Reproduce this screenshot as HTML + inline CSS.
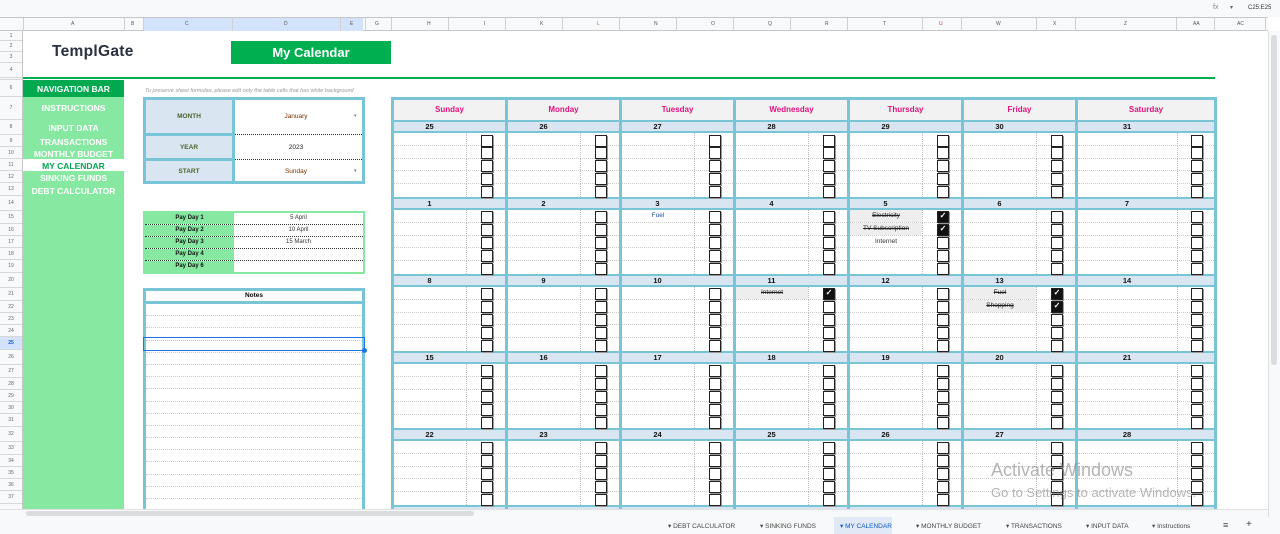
<!DOCTYPE html>
<html><head><meta charset="utf-8"><style>
*{box-sizing:border-box;margin:0;padding:0}
body{width:1280px;height:534px;overflow:hidden;background:#fff;font-family:"Liberation Sans",Arial,sans-serif;position:relative}
.a{position:absolute}
#top{left:0;top:0;width:1280px;height:17px;background:#f8f9fa}
#colh{left:0;top:17px;width:1268px;height:14px;background:#f8f9fa;border-top:1px solid #c7c7c7;border-bottom:1px solid #c7c7c7;font-size:5px;color:#555}
#colh span{position:absolute;top:3px}
#colh i{position:absolute;top:0;height:13px;border-left:1px solid #d0d0d0}
#rowh{left:0;top:31px;width:23px;height:479px;background:#f8f9fa;border-right:1px solid #c7c7c7}
#rowh div{border-bottom:1px solid #d8d8d8;font-size:5px;color:#666;text-align:center;display:flex;align-items:center;justify-content:center}
#nav{left:23px;top:97px;width:101px;height:413px;background:#86e8a1}
.nv{position:absolute;left:23px;width:101px;text-align:center;color:#fff;font-weight:bold;font-size:8.5px}
.mt{left:143px;top:97px;width:222px;height:87px;border:3px solid #78c5d8;background:#fff}
.mt div{position:absolute;font-size:6.5px;text-align:center}
.pd{left:143px;top:211px;width:222px;height:63px;border:2px solid #86e8a1;background:#fff}
.pd div{height:12px;border-bottom:1px dotted #333;display:flex;font-size:6px;line-height:11px}
.pd div:last-child{border-bottom:none}
.pd b{width:89px;background:#86e8a1;text-align:center;font-weight:bold;color:#111}
.pd span{flex:1;text-align:center;color:#333}
#notes{left:143px;top:288px;width:222px;height:222px;border:3px solid #78c5d8;border-bottom:none}
#notes p{height:12.2px;border-bottom:1px dotted #ccc}
#cal{left:391px;top:97px;width:826px;border:3px solid #78c5d8;border-left:none}
.w{display:flex}
.d{width:114px;border-left:3px solid #78c5d8}
.d.sat{width:139px}
.dn{height:20px;background:#f2f2f2;color:#e0127d;font-weight:bold;font-size:8px;text-align:center;line-height:20px}
.h{height:13px;border-top:2px solid #78c5d8;border-bottom:2px solid #78c5d8;background:#d9e6f2;font-size:7.5px;font-weight:bold;text-align:center;line-height:9px;padding-right:40px;color:#111}
.sat .h{padding-right:38px}
.d p{height:12.8px;position:relative;border-bottom:1px dotted #ccc;font-size:6.5px;line-height:12px}
.d p:last-child{border-bottom:none}
.d p::before{content:"";position:absolute;left:72px;top:0;height:13px;border-left:1px dotted #bbb}
.d p::after{content:"";position:absolute;left:87px;top:1.5px;width:10px;height:10px;border:1.5px solid #222;background:#fff;box-shadow:1px 1px 0 #999}
.sat p::before{left:99px}.sat p::after{left:113px}
.d p.k::after{content:"✓";background:#111;color:#fff;font-size:8px;line-height:8px;text-align:center;font-weight:bold}
.d p span{position:absolute;left:0;width:72px;text-align:center;color:#333}
.d p span.s{text-decoration:line-through;background:#eee;color:#222}
.d p span.b{color:#1f4ea8}
#tabs{left:0;top:517px;width:1280px;height:17px;background:#f8f9fa;font-size:6.5px;color:#444}
#tabs span{position:absolute;top:5px}
</style></head><body>
<div id="top" class="a"><span class="a" style="left:1213px;top:4px;font-size:7px;color:#888">fx</span><span class="a" style="left:1230px;top:4px;font-size:6px;color:#666">▾</span><span class="a" style="left:1248px;top:5px;font-size:6px;color:#333">C25:E25</span></div>
<div id="colh" class="a">
<span style="left:71px">A</span><span style="left:131px">B</span><span style="left:375px">G</span><span style="left:427px">H</span><span style="left:484px">I</span><span style="left:540px">K</span><span style="left:597px;color:#e07020">L</span><span style="left:654px">N</span><span style="left:711px">O</span><span style="left:768px">Q</span><span style="left:825px">R</span><span style="left:883px">T</span><span style="left:939px;color:#c33">U</span><span style="left:996px">W</span><span style="left:1053px">X</span><span style="left:1124px">Z</span><span style="left:1193px">AA</span><span style="left:1237px">AC</span>
<div class="a" style="left:143px;top:0;width:220px;height:13px;background:#d3e3fd"></div>
<span style="left:185px">C</span><span style="left:284px">D</span><span style="left:350px">E</span>
<i style="left:23px"></i><i style="left:124px"></i><i style="left:143px"></i><i style="left:232px"></i><i style="left:340px"></i><i style="left:365px"></i><i style="left:391px"></i><i style="left:448px"></i><i style="left:505px"></i><i style="left:562px"></i><i style="left:619px"></i><i style="left:676px"></i><i style="left:733px"></i><i style="left:790px"></i><i style="left:847px"></i><i style="left:922px"></i><i style="left:961px"></i><i style="left:1036px"></i><i style="left:1075px"></i><i style="left:1176px"></i><i style="left:1214px"></i><i style="left:1265px"></i>
</div>
<div id="rowh" class="a">
<div style="height:10px">1</div><div style="height:11px">2</div><div style="height:11px">3</div><div style="height:15px">4</div><div style="height:2px"></div><div style="height:17px">6</div><div style="height:23px">7</div><div style="height:15px">8</div><div style="height:12px">9</div><div style="height:12px">10</div><div style="height:12px">11</div><div style="height:12px">12</div><div style="height:13px">13</div><div style="height:15px">14</div><div style="height:13px">15</div><div style="height:12px">16</div><div style="height:12px">17</div><div style="height:12px">18</div><div style="height:13px">19</div><div style="height:15px">20</div><div style="height:13px">21</div><div style="height:12px">22</div><div style="height:12px">23</div><div style="height:12px">24</div><div style="height:13px;background:#d3e3fd;color:#0b57d0;font-weight:bold">25</div><div style="height:15px">26</div><div style="height:13px">27</div><div style="height:12px">28</div><div style="height:12px">29</div><div style="height:12px">30</div><div style="height:13px">31</div><div style="height:15px">32</div><div style="height:13px">33</div><div style="height:12px">34</div><div style="height:12px">35</div><div style="height:12px">36</div><div style="height:13px">37</div>
</div>
<div class="a" style="left:52px;top:43px;font-size:15.5px;font-weight:bold;color:#2b3040;letter-spacing:0.3px">TemplGate</div>
<div class="a" style="left:231px;top:41px;width:160px;height:23px;background:#00b050;color:#fff;font-weight:bold;font-size:13px;text-align:center;line-height:23px">My Calendar</div>
<div class="a" style="left:23px;top:77px;width:1192px;height:2px;background:#00b050"></div>
<div id="nav" class="a"></div>
<div class="a" style="left:23px;top:80px;width:101px;height:17px;background:#00a84f"></div>
<div class="nv" style="top:84px">NAVIGATION BAR</div>
<div class="nv" style="top:103px">INSTRUCTIONS</div>
<div class="nv" style="top:123px">INPUT DATA</div>
<div class="nv" style="top:137px">TRANSACTIONS</div>
<div class="nv" style="top:149px">MONTHLY BUDGET</div>
<div class="a" style="left:23px;top:159px;width:101px;height:12px;background:#fff"></div>
<div class="nv" style="top:161px;color:#00a84f">MY CALENDAR</div>
<div class="nv" style="top:173px">SINKING FUNDS</div>
<div class="nv" style="top:186px">DEBT CALCULATOR</div>
<div class="a" style="left:145px;top:88px;font-size:5.5px;font-style:italic;color:#999">To preserve sheet formulas, please edit only the table cells that has white background</div>
<div class="mt a">
<div style="left:0;top:0;width:86px;height:81px;background:#d9e6f2"></div>
<div style="left:86px;top:0;width:3px;height:81px;background:#78c5d8"></div>
<div style="left:0;top:33px;width:86px;height:3px;background:#78c5d8"></div>
<div style="left:0;top:58px;width:86px;height:3px;background:#78c5d8"></div>
<div style="left:89px;top:34px;width:127px;border-top:1px dotted #333"></div>
<div style="left:89px;top:59px;width:127px;border-top:1px dotted #333"></div>
<div style="left:0;top:13px;width:86px;font-weight:bold;color:#4f6228">MONTH</div>
<div style="left:0;top:44px;width:86px;font-weight:bold;color:#4f6228">YEAR</div>
<div style="left:0;top:68px;width:86px;font-weight:bold;color:#4f6228">START</div>
<div style="left:89px;top:13px;width:122px;color:#7a2e00">January</div>
<div style="left:89px;top:44px;width:122px;color:#222">2023</div>
<div style="left:89px;top:68px;width:122px;color:#7a2e00">Sunday</div>
<div style="left:208px;top:13px;color:#777;font-size:5px">▾</div>
<div style="left:208px;top:68px;color:#777;font-size:5px">▾</div>
</div>
<div class="pd a">
<div><b>Pay Day 1</b><span>5 April</span></div>
<div><b>Pay Day 2</b><span>10 April</span></div>
<div><b>Pay Day 3</b><span>15 March</span></div>
<div><b>Pay Day 4</b><span></span></div>
<div><b>Pay Day 6</b><span></span></div>
</div>
<div id="notes" class="a">
<div style="height:13px;border-bottom:3px solid #78c5d8;font-size:6.5px;font-weight:bold;text-align:center;line-height:10px">Notes</div>
<p></p><p></p><p></p><p></p><p></p><p></p><p></p><p></p><p></p><p></p><p></p><p></p><p></p><p></p><p></p><p></p><p></p>
</div>
<div class="a" style="left:143px;top:337px;width:222px;height:14px;border:1.5px solid #1a73e8"></div>
<div class="a" style="left:362px;top:348px;width:5px;height:5px;border-radius:50%;background:#1a73e8"></div>

<div id="cal" class="a">
<div class="w"><div class="d dn">Sunday</div><div class="d dn">Monday</div><div class="d dn">Tuesday</div><div class="d dn">Wednesday</div><div class="d dn">Thursday</div><div class="d dn">Friday</div><div class="d dn sat">Saturday</div></div>
<div class="w">
<div class="d"><div class="h">25</div><p></p><p></p><p></p><p></p><p></p></div>
<div class="d"><div class="h">26</div><p></p><p></p><p></p><p></p><p></p></div>
<div class="d"><div class="h">27</div><p></p><p></p><p></p><p></p><p></p></div>
<div class="d"><div class="h">28</div><p></p><p></p><p></p><p></p><p></p></div>
<div class="d"><div class="h">29</div><p></p><p></p><p></p><p></p><p></p></div>
<div class="d"><div class="h">30</div><p></p><p></p><p></p><p></p><p></p></div>
<div class="d sat"><div class="h">31</div><p></p><p></p><p></p><p></p><p></p></div>
</div>
<div class="w">
<div class="d"><div class="h">1</div><p></p><p></p><p></p><p></p><p></p></div>
<div class="d"><div class="h">2</div><p></p><p></p><p></p><p></p><p></p></div>
<div class="d"><div class="h">3</div><p><span class="b">Fuel</span></p><p></p><p></p><p></p><p></p></div>
<div class="d"><div class="h">4</div><p></p><p></p><p></p><p></p><p></p></div>
<div class="d"><div class="h">5</div><p class="k"><span class="s">Electricity</span></p><p class="k"><span class="s">TV Subscription</span></p><p><span>Internet</span></p><p></p><p></p></div>
<div class="d"><div class="h">6</div><p></p><p></p><p></p><p></p><p></p></div>
<div class="d sat"><div class="h">7</div><p></p><p></p><p></p><p></p><p></p></div>
</div>
<div class="w">
<div class="d"><div class="h">8</div><p></p><p></p><p></p><p></p><p></p></div>
<div class="d"><div class="h">9</div><p></p><p></p><p></p><p></p><p></p></div>
<div class="d"><div class="h">10</div><p></p><p></p><p></p><p></p><p></p></div>
<div class="d"><div class="h">11</div><p class="k"><span class="s">Internet</span></p><p></p><p></p><p></p><p></p></div>
<div class="d"><div class="h">12</div><p></p><p></p><p></p><p></p><p></p></div>
<div class="d"><div class="h">13</div><p class="k"><span class="s">Fuel</span></p><p class="k"><span class="s">Shopping</span></p><p></p><p></p><p></p></div>
<div class="d sat"><div class="h">14</div><p></p><p></p><p></p><p></p><p></p></div>
</div>
<div class="w">
<div class="d"><div class="h">15</div><p></p><p></p><p></p><p></p><p></p></div>
<div class="d"><div class="h">16</div><p></p><p></p><p></p><p></p><p></p></div>
<div class="d"><div class="h">17</div><p></p><p></p><p></p><p></p><p></p></div>
<div class="d"><div class="h">18</div><p></p><p></p><p></p><p></p><p></p></div>
<div class="d"><div class="h">19</div><p></p><p></p><p></p><p></p><p></p></div>
<div class="d"><div class="h">20</div><p></p><p></p><p></p><p></p><p></p></div>
<div class="d sat"><div class="h">21</div><p></p><p></p><p></p><p></p><p></p></div>
</div>
<div class="w">
<div class="d"><div class="h">22</div><p></p><p></p><p></p><p></p><p></p></div>
<div class="d"><div class="h">23</div><p></p><p></p><p></p><p></p><p></p></div>
<div class="d"><div class="h">24</div><p></p><p></p><p></p><p></p><p></p></div>
<div class="d"><div class="h">25</div><p></p><p></p><p></p><p></p><p></p></div>
<div class="d"><div class="h">26</div><p></p><p></p><p></p><p></p><p></p></div>
<div class="d"><div class="h">27</div><p></p><p></p><p></p><p></p><p></p></div>
<div class="d sat"><div class="h">28</div><p></p><p></p><p></p><p></p><p></p></div>
</div>
<div class="w"><div class="d"><div class="h"></div></div><div class="d"><div class="h"></div></div><div class="d"><div class="h"></div></div><div class="d"><div class="h"></div></div><div class="d"><div class="h"></div></div><div class="d"><div class="h"></div></div><div class="d sat"><div class="h"></div></div></div>
</div>

<div class="a" style="left:991px;top:460px;font-size:18px;color:rgba(120,120,120,0.55)">Activate Windows</div>
<div class="a" style="left:991px;top:485px;font-size:13px;color:rgba(120,120,120,0.55)">Go to Settings to activate Windows.</div>
<div class="a" style="left:1268px;top:31px;width:12px;height:486px;background:#f8f9fa;border-left:1px solid #e0e0e0"><div style="margin:4px 2px;width:6px;height:330px;background:#dadce0;border-radius:3px"></div></div>
<div class="a" style="left:0;top:509px;width:1268px;height:8px;background:#f8f9fa;border-top:1px solid #e0e0e0"><div style="margin:1px 0 0 26px;width:448px;height:5px;background:#dadce0;border-radius:3px"></div></div>
<div id="tabs" class="a">
<div class="a" style="left:834px;top:0;width:58px;height:17px;background:#e1e9f7"></div>
<span style="left:668px">▾ DEBT CALCULATOR</span>
<span style="left:760px">▾ SINKING FUNDS</span>
<span style="left:840px;color:#0b57d0">▾ MY CALENDAR</span>
<span style="left:916px">▾ MONTHLY BUDGET</span>
<span style="left:1006px">▾ TRANSACTIONS</span>
<span style="left:1086px">▾ INPUT DATA</span>
<span style="left:1152px">▾ Instructions</span>
<span style="left:1223px;font-size:9px;top:3px">≡</span>
<span style="left:1246px;font-size:10px;top:2px">+</span>
</div>
</body></html>
